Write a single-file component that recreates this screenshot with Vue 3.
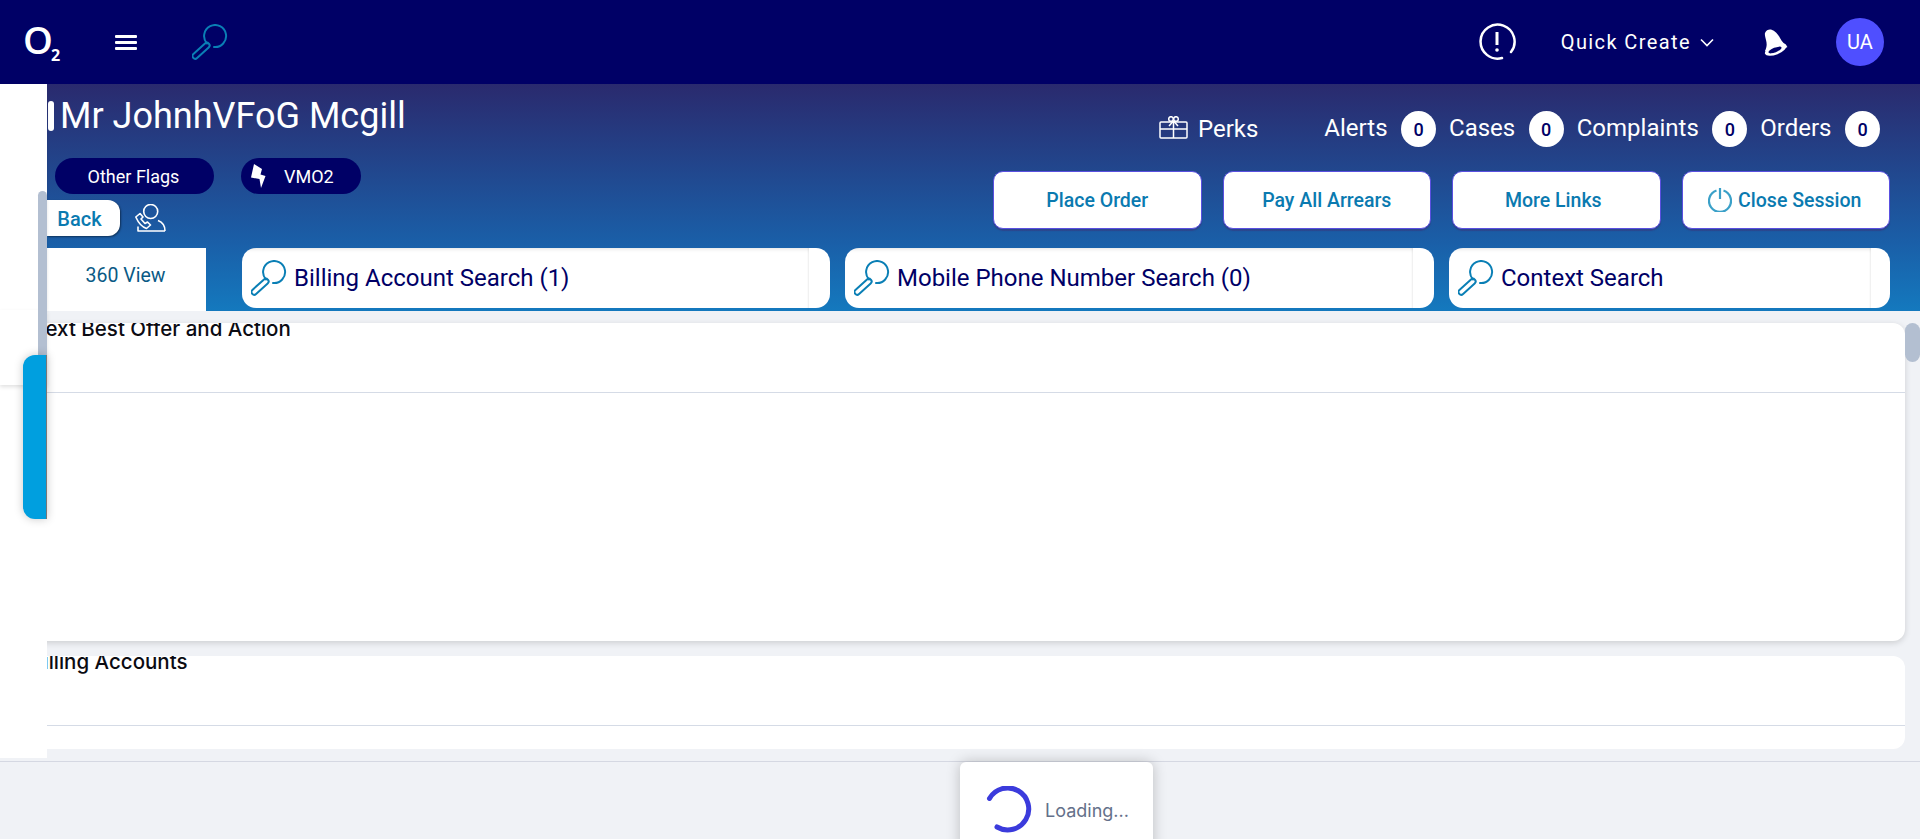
<script setup>
const stats = [
  { label: 'Alerts', count: 0 },
  { label: 'Cases', count: 0 },
  { label: 'Complaints', count: 0 },
  { label: 'Orders', count: 0 }
]
const searches = [
  { label: 'Billing Account Search (1)', cls: 's1' },
  { label: 'Mobile Phone Number Search (0)', cls: 's2' },
  { label: 'Context Search', cls: 's3' }
]
const actions = ['Place Order', 'Pay All Arrears', 'More Links']
</script>

<template>
  <div class="app">
    <header class="nav">
      <div class="logo">O<sub>2</sub></div>
      <div class="burger"><i></i><i></i><i></i></div>
      <svg class="key nav-key" viewBox="0 0 36 36" fill="none" stroke="#0a7fb5" stroke-width="2">
        <path d="M15 19.500A11 11 0 1 1 22 23" stroke-linecap="round" />
        <rect x="-1.500" y="24" width="21" height="5.500" rx="2.700" transform="rotate(-42 9 26.700)" />
      </svg>
      <div class="nav-right">
        <svg class="alert" viewBox="0 0 38 38" fill="none" stroke="#fff" stroke-width="2.500">
          <path d="M24 35A17 17 0 1 1 33 29" stroke-linecap="round" />
          <path d="M19 9V22" stroke-width="3" />
          <circle cx="19" cy="27" r="1.800" fill="#fff" stroke="none" />
        </svg>
        <div class="quick">Quick Create</div>
        <svg class="chev" viewBox="0 0 14 9" fill="none" stroke="#fff" stroke-width="1.600"><path d="M1 1.500 7 7.500 13 1.500" /></svg>
        <svg class="bell" viewBox="0 0 24 27">
          <path d="M1 4C2 1 5 0 7 .5 11 1.500 14 5 16 9c2 4 5 6 7.500 9L12 23 1 22C3 18 3 15 2 11 1.500 8 .5 6 1 4Z" fill="#fff" />
          <ellipse cx="11.700" cy="20.500" rx="11.500" ry="5" transform="rotate(-22 11.700 20.500)" fill="#fff" />
          <ellipse cx="11" cy="21" rx="7" ry="2.300" transform="rotate(-22 11 21)" fill="#000066" />
        </svg>
        <div class="avatar">UA</div>
      </div>
    </header>

    <section class="hero">
      <div class="hero-top">
        <div class="who">
          <h1 class="name"><span class="bar"></span>Mr JohnhVFoG Mcgill</h1>
          <div class="flags">
            <span class="flag flag-a">Other Flags</span>
            <span class="flag flag-b">
              <svg class="bolt" viewBox="0 0 15 24"><path d="M3 0 11 5 9.500 10.500 14.500 12 10 24 8.500 15 0 13.500Z" fill="#fff" /></svg>
              VMO2
            </span>
          </div>
          <div class="back-row">
            <button class="back">Back</button>
            <svg class="agent" viewBox="0 0 32 29" fill="none" stroke="#fff" stroke-width="1.600" stroke-linejoin="round">
              <circle cx="15.700" cy="7.500" r="7" />
              <path d="M3 22.500V27H30" />
              <path d="M30 27C30 22 27 18 23 16.500" />
              <path d="M.8 13 5 9.500 8 13 6 15 10 19.500 12.500 18 15.500 21 11.500 24.500C7 23 3 18 .8 13Z" />
            </svg>
          </div>
        </div>
        <div class="side">
          <div class="stats">
            <div class="perks">
              <svg class="gift" viewBox="0 0 29 23" fill="none" stroke="#fff" stroke-width="1.500">
                <rect x="1" y="6" width="27" height="16" rx="1" />
                <path d="M1 13H28M14.500 6V22" />
                <circle cx="12" cy="3" r="2.300" />
                <circle cx="17" cy="3" r="2.300" />
                <path d="M14.500 5 10 10M14.500 5 19 10" />
              </svg>
              <span>Perks</span>
            </div>
            <div v-for="s in stats" :key="s.label" class="stat">
              <span>{{ s.label }}</span><b class="badge">{{ s.count }}</b>
            </div>
          </div>
          <div class="actions">
            <button v-for="a in actions" :key="a" class="act">{{ a }}</button>
            <button class="act">
              <svg class="power" viewBox="0 0 24 24" fill="none" stroke="#3aa0c8" stroke-width="2.200">
                <path d="M8.500 2.500A11 11 0 1 0 15.500 2.500" />
                <path d="M12 0V11" />
              </svg>
              Close Session
            </button>
          </div>
        </div>
      </div>
      <div class="tabs">
        <div class="tab360">360 View</div>
        <div v-for="s in searches" :key="s.cls" class="search" :class="s.cls">
          <svg class="key" viewBox="0 0 36 36" fill="none" stroke="#0a7fb5" stroke-width="2">
            <path d="M15 19.500A11 11 0 1 1 22 23" stroke-linecap="round" />
            <rect x="-1.500" y="24" width="21" height="5.500" rx="2.700" transform="rotate(-42 9 26.700)" />
          </svg>
          <span>{{ s.label }}</span>
          <div class="search-end"></div>
        </div>
      </div>
    </section>

    <main class="content">
      <section class="card card-a">
        <h2 class="card-title">Next Best Offer and Action</h2>
      </section>
      <section class="card card-b">
        <h2 class="card-title">Billing Accounts</h2>
      </section>
    </main>

    <footer class="foot"></footer>

    <aside class="sidebar">
      <div class="band-a"></div>
      <div class="band-b"></div>
      <div class="band-c"></div>
      <div class="sb-thumb"></div>
      <div class="blue-tab"></div>
    </aside>

    <div class="page-thumb"></div>

    <div class="toast">
      <svg class="spinner" viewBox="0 0 48 48" fill="none" stroke="#3b3bdc" stroke-width="5">
        <path d="M3.500 12.500A21 21 0 1 1 11 41" stroke-linecap="round" />
      </svg>
      <span>Loading...</span>
    </div>
  </div>
</template>

<style>
html, body { margin: 0; overflow: hidden; }
</style>

<style scoped>
.app {
  position: relative;
  width: 1920px;
  height: 839px;
  overflow: hidden;
  background: #f0f2f6;
  font-family: Roboto, "Liberation Sans", sans-serif;
  display: flex;
  flex-direction: column;
}
.nav {
  height: 84px;
  flex: none;
  background: #000066;
  display: flex;
  align-items: center;
  color: #fff;
}
.logo {
  margin-left: 23px;
  width: 92px;
  font: 600 38px/1 "Open Sans", sans-serif;
  color: #fff;
  margin-top: -7px;
  letter-spacing: -2px;
}
.logo sub {
  font-size: 16px;
  font-weight: 700;
  vertical-align: -7px;
  line-height: 0;
  letter-spacing: 0;
}
.burger {
  width: 22px;
  display: flex;
  flex-direction: column;
  gap: 3px;
}
.burger i {
  display: block;
  height: 3px;
  background: #fff;
  border-radius: 1px;
}
.key {
  width: 36px;
  height: 36px;
  flex: none;
}
.nav-key {
  margin-left: 55px;
}
.nav-right {
  margin-left: auto;
  display: flex;
  align-items: center;
}
.alert {
  width: 38px;
  height: 38px;
}
.quick {
  margin-left: 45px;
  font-size: 20px;
  font-weight: 400;
  letter-spacing: 1.400px;
}
.chev {
  width: 14px;
  height: 9px;
  margin-left: 9px;
}
.bell {
  width: 24px;
  height: 27px;
  margin-left: 50px;
}
.avatar {
  width: 48px;
  height: 48px;
  margin-left: 48px;
  margin-right: 36px;
  border-radius: 50%;
  background: #4f4fff;
  font-size: 20px;
  display: flex;
  align-items: center;
  justify-content: center;
}
.hero {
  height: 227px;
  flex: none;
  background: linear-gradient(180deg, #2a2a6e 0%, #1a5fa8 70%, #1479be 100%);
  display: flex;
  flex-direction: column;
}
.hero-top {
  height: 164px;
  flex: none;
  display: flex;
  justify-content: space-between;
}
.who {
  padding-left: 47px;
}
.name {
  margin: 13px 0 0;
  height: 38px;
  display: flex;
  align-items: center;
  font-size: 36px;
  font-weight: 400;
  line-height: 38px;
  color: #fff;
}
.bar {
  width: 6px;
  height: 30px;
  margin: 0 6px 0 1px;
  background: #fff;
  border-radius: 3px;
}
.flags {
  display: flex;
  margin: 23px 0 0 8px;
  gap: 27px;
}
.flag {
  height: 36px;
  border-radius: 18px;
  background: #000066;
  color: #fff;
  font-size: 18px;
  display: flex;
  align-items: center;
  justify-content: center;
}
.flag-a { width: 159px; padding-right: 2px; box-sizing: border-box; }
.flag-b { width: 120px; justify-content: flex-start; }
.bolt {
  width: 15px;
  height: 24px;
  margin: 0 18px 0 10px;
}
.back-row {
  display: flex;
  align-items: center;
  margin-top: 6px;
}
.back {
  width: 73px;
  height: 36px;
  border: 0;
  padding: 1px 8px 0 0;
  border-radius: 0 12px 12px 0;
  background: #fff;
  color: #0a7ab0;
  font: 500 20px Roboto, sans-serif;
  box-shadow: 1px 1px 2px rgba(0, 0, 0, .45);
}
.agent {
  width: 32px;
  height: 29px;
  margin-left: 15px;
}
.side {
  padding-right: 30px;
  width: 900px;
  box-sizing: border-box;
  display: flex;
  flex-direction: column;
  align-items: flex-end;
}
.stats {
  margin-top: 27px;
  height: 36px;
  display: flex;
  align-items: center;
  font-size: 24px;
  color: #fff;
  padding-right: 10px;
}
.perks {
  display: flex;
  align-items: center;
  gap: 10px;
  margin-right: 66px;
}
.gift {
  width: 29px;
  height: 23px;
  margin-top: -4px;
}
.stat {
  display: flex;
  align-items: center;
  gap: 13.500px;
  margin-right: 13px;
}
.stat:last-child { margin-right: 0; }
.stat span { margin-top: -3px; }
.badge {
  width: 35px;
  height: 36px;
  border-radius: 50%;
  background: #fff;
  color: #000066;
  font-size: 18px;
  font-weight: 500;
  display: flex;
  align-items: center;
  justify-content: center;
}
.actions {
  margin-top: 24px;
  display: flex;
  gap: 21px;
}
.act {
  width: 208.500px;
  height: 58px;
  border: 1px solid #5a50e0;
  border-radius: 10px;
  background: #fff;
  color: #0a7ab0;
  font: 500 19.500px Roboto, sans-serif;
  display: flex;
  align-items: center;
  justify-content: center;
  gap: 6px;
  box-shadow: 0 2px 1px rgba(60, 50, 120, .5);
}
.act:nth-child(3) { padding-right: 12px; }
.act:last-child { padding-right: 8px; }
.power {
  width: 24px;
  height: 24px;
}
.tabs {
  height: 63px;
  display: flex;
}
.tab360 {
  margin-left: 47px;
  width: 159px;
  background: #fff;
  color: #0a5a85;
  font-size: 19.500px;
  display: flex;
  align-items: center;
  justify-content: center;
  padding-bottom: 8px;
  padding-right: 2px;
  box-sizing: border-box;
}
.search {
  height: 60px;
  position: relative;
  background: #fff;
  border-radius: 14px;
  display: flex;
  align-items: center;
  color: #000066;
  font-size: 24px;
  overflow: hidden;
  padding-left: 9px;
  box-sizing: border-box;
  gap: 7px;
}
.s1 { width: 588px; margin-left: 36px; }
.s2 { width: 589px; margin-left: 15px; }
.s3 { width: 441px; margin-left: 15px; }
.search-end {
  position: absolute;
  top: 0;
  bottom: 0;
  right: 21px;
  left: 0;
  pointer-events: none;
  box-shadow: inset 0 4px 4px -3px rgba(0, 0, 0, .12), inset -2px 0 2px -1px rgba(0, 0, 0, .07);
}
.s3 .search-end { right: 19px; }
.content {
  flex: 1;
  min-height: 0;
  padding-top: 12px;
  padding-right: 15px;
  display: flex;
  flex-direction: column;
  gap: 15px;
}
.card {
  background: #fff;
  border-radius: 12px;
  overflow: hidden;
  flex: none;
}
.card-a {
  height: 318px;
  box-shadow: 0 2px 6px rgba(0, 0, 0, .15);
}
.card-b {
  height: 93px;
}
.card-title {
  margin: -4px 0 0;
  height: 74px;
  box-sizing: border-box;
  border-bottom: 1px solid #d5dbe6;
  padding-left: 30px;
  font: 500 20.500px/20px Inter, sans-serif;
  color: #0b0b12;
}
.foot {
  height: 78px;
  flex: none;
  border-top: 1px solid #d5d8e2;
  box-sizing: border-box;
  background: #f0f2f6;
}
.sidebar {
  position: absolute;
  left: 0;
  top: 84px;
  width: 47px;
  height: 674px;
  display: flex;
  flex-direction: column;
}
.band-a {
  height: 226px;
  background: #fff;
  box-shadow: 0 1px 3px rgba(0, 0, 0, .12);
}
.band-b {
  height: 75px;
  background: #fff;
  box-shadow: 0 2px 4px rgba(0, 0, 0, .12);
  position: relative;
}
.band-c {
  flex: 1;
  background: #fff;
}
.sb-thumb {
  position: absolute;
  left: 38px;
  top: 107px;
  width: 9px;
  height: 170px;
  background: #b3bfd1;
  border-radius: 5px 5px 0 0;
}
.blue-tab {
  position: absolute;
  left: 23px;
  top: 271px;
  width: 24px;
  height: 164px;
  background: #009fdf;
  border-radius: 12px 0 0 12px;
  box-shadow: 0 0 10px rgba(0, 0, 0, .22);
  border-right: 1px solid #777;
  box-sizing: border-box;
}
.page-thumb {
  position: absolute;
  left: 1905px;
  top: 323px;
  width: 15px;
  height: 39px;
  border-radius: 8px;
  background: #b3bfd1;
}
.toast {
  position: absolute;
  left: 960px;
  top: 762px;
  width: 193px;
  height: 100px;
  background: #fff;
  border-radius: 6px;
  box-shadow: 0 0 14px rgba(0, 0, 0, .22);
  display: flex;
  align-items: flex-start;
  color: #64708a;
  font: 400 18px/22px Inter, sans-serif;
}
.spinner {
  width: 48px;
  height: 48px;
  margin: 24px 0 0 26px;
}
.toast span {
  margin: 38px 0 0 11px;
}
</style>
